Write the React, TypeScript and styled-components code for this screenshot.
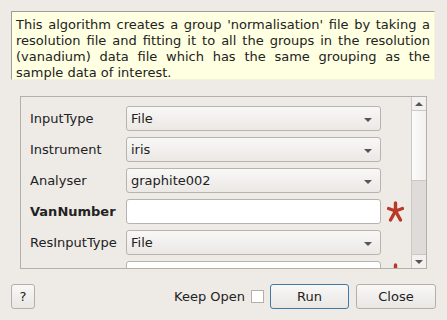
import * as React from 'react';
import styled, { createGlobalStyle } from 'styled-components';

const GlobalStyle = createGlobalStyle`
    html, body {
        margin: 0;
        padding: 0;
        background: #eeebe7;
    }
    body {
        font-family: "DejaVu Sans", "Liberation Sans", sans-serif;
        font-size: 13px;
        color: #222;
    }
`;

const Dialog = styled.div`
    width: 447px;
    height: 320px;
    box-sizing: border-box;
    display: flex;
    flex-direction: column;
    background: #eeebe7;
`;

const Description = styled.div`
    margin: 11px 12px 0 11px;
    height: 69px;
    box-sizing: border-box;
    padding: 5px 4px 0 4px;
    background: #ffffe1;
    border-top: 1px solid #a09d99;
    border-left: 1px solid #a09d99;
    border-right: 1px solid #f4f2dc;
    border-bottom: 1px solid #f4f2dc;
    line-height: 16px;
    text-align: justify;
`;

const ScrollArea = styled.div`
    margin: 16px 20px 0 20px;
    height: 173px;
    box-sizing: border-box;
    border: 1px solid #b3afab;
    display: flex;
    overflow: hidden;
`;

const Content = styled.div`
    flex: 1;
    padding: 9px 0 0 9px;
    display: flex;
    flex-direction: column;
    gap: 6px;
    overflow: hidden;
`;

const Row = styled.div`
    display: grid;
    grid-template-columns: 96px 255px 22px;
    grid-template-rows: 25px;
    align-items: center;
    height: 25px;
    flex-shrink: 0;
`;

const Label = styled.span<{ $bold?: boolean }>`
    font-weight: ${p => (p.$bold ? 'bold' : 'normal')};
    white-space: nowrap;
`;

const Combo = styled.div`
    height: 25px;
    box-sizing: border-box;
    border: 1px solid #b7b3ae;
    border-radius: 3px;
    background: linear-gradient(#f9f8f7, #ebe8e5);
    display: flex;
    align-items: center;
    justify-content: space-between;
    padding: 0 8px 0 4px;
`;

const Arrow = styled.span`
    width: 0;
    height: 0;
    border-left: 4px solid transparent;
    border-right: 4px solid transparent;
    border-top: 4px solid #555;
    margin-top: 2px;
`;

const LineEdit = styled.div`
    height: 25px;
    box-sizing: border-box;
    border: 1px solid #b7b3ae;
    border-radius: 3px;
    background: #fff;
`;

const StarIcon = styled.svg`
    display: block;
    margin-left: 6px;
`;

const Scrollbar = styled.div`
    width: 14px;
    border-left: 1px solid #cbc7c3;
    display: flex;
    flex-direction: column;
    background: #dedbd8;
`;

const ScrollButton = styled.div<{ $down?: boolean }>`
    height: 13px;
    background: #f3f1ef;
    display: flex;
    align-items: center;
    justify-content: center;
    border-top: ${p => (p.$down ? '1px solid #cbc7c3' : 'none')};
    border-bottom: ${p => (p.$down ? 'none' : '1px solid #cbc7c3')};
    &::after {
        content: '';
        width: 0;
        height: 0;
        border-left: 4px solid transparent;
        border-right: 4px solid transparent;
        ${p => (p.$down ? 'border-top: 4px solid #555;' : 'border-bottom: 4px solid #555;')}
    }
`;

const Handle = styled.div`
    height: 69px;
    background: linear-gradient(90deg, #fbfbfa, #f3f1ef);
    border-bottom: 1px solid #cbc7c3;
`;

const Trough = styled.div`
    flex: 1;
`;

const ButtonBar = styled.div`
    margin-top: 15px;
    padding: 0 11px;
    display: flex;
    align-items: center;
    height: 25px;
`;

const Button = styled.button<{ $default?: boolean; $w: number }>`
    width: ${p => p.$w}px;
    height: 25px;
    box-sizing: border-box;
    border: 1px solid ${p => (p.$default ? '#3d7aa8' : '#b3afab')};
    border-radius: 3px;
    background: linear-gradient(#f9f8f7, #e9e6e3);
    font-family: "DejaVu Sans", sans-serif;
    font-size: 13px;
    color: #222;
    padding: 0;
`;

const Spacer = styled.div`
    flex: 1;
`;

const KeepOpen = styled.span`
    margin-right: 6px;
`;

const Check = styled.span`
    width: 13px;
    height: 13px;
    box-sizing: border-box;
    border: 1px solid #b3afab;
    background: #fff;
    margin-right: 6px;
`;

const Star = () => (
    <StarIcon width="17" height="23" viewBox="0 0 17 23">
        <g stroke="#b8392a" strokeWidth="3.4" fill="none" strokeLinecap="round">
            <line x1="8.5" y1="12" x2="8.5" y2="3" />
            <line x1="8.5" y1="11" x2="15.5" y2="8.5" />
            <line x1="8.5" y1="11" x2="1.5" y2="8.5" />
            <line x1="8.5" y1="11" x2="13.5" y2="20" />
            <line x1="8.5" y1="11" x2="3.5" y2="20" />
        </g>
    </StarIcon>
);

type Field = { label: string; value?: string; kind: 'combo' | 'edit'; required?: boolean };

const fields: Field[] = [
    { label: 'InputType', value: 'File', kind: 'combo' },
    { label: 'Instrument', value: 'iris', kind: 'combo' },
    { label: 'Analyser', value: 'graphite002', kind: 'combo' },
    { label: 'VanNumber', kind: 'edit', required: true },
    { label: 'ResInputType', value: 'File', kind: 'combo' },
    { label: 'ResFile', kind: 'edit', required: true },
];

export default function App() {
    return (
        <>
            <GlobalStyle />
            <Dialog>
                <Description>
                    This algorithm creates a group 'normalisation' file by taking a resolution file and
                    fitting it to all the groups in the resolution (vanadium) data file which has the same
                    grouping as the sample data of interest.
                </Description>
                <ScrollArea>
                    <Content>
                        {fields.map(f => (
                            <Row key={f.label}>
                                <Label $bold={f.required}>{f.label}</Label>
                                {f.kind === 'combo' ? (
                                    <Combo>
                                        <span>{f.value}</span>
                                        <Arrow />
                                    </Combo>
                                ) : (
                                    <LineEdit />
                                )}
                                {f.required ? <Star /> : <span />}
                            </Row>
                        ))}
                    </Content>
                    <Scrollbar>
                        <ScrollButton />
                        <Handle />
                        <Trough />
                        <ScrollButton $down />
                    </Scrollbar>
                </ScrollArea>
                <ButtonBar>
                    <Button $w={24}>?</Button>
                    <Spacer />
                    <KeepOpen>Keep Open</KeepOpen>
                    <Check />
                    <Button $w={79} $default>Run</Button>
                    <Button $w={80} style={{ marginLeft: 7 }}>Close</Button>
                </ButtonBar>
            </Dialog>
        </>
    );
}
